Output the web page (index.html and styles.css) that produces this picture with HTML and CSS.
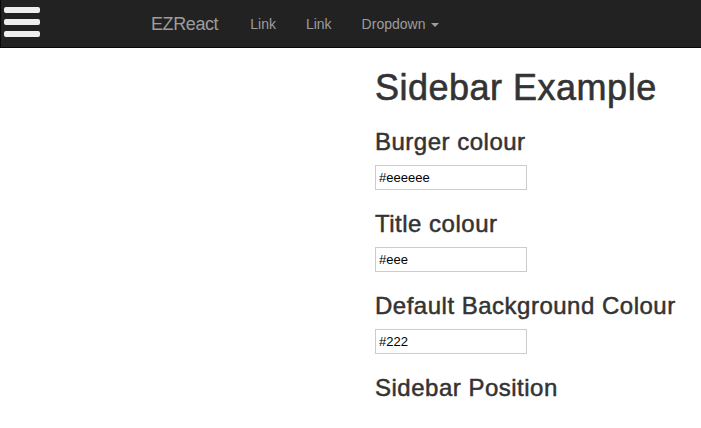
FILE: index.html
```
<!DOCTYPE html>
<html>
<head>
<meta charset="utf-8">
<link rel="stylesheet" href="styles.css">
</head>
<body>
<div class="burger" aria-label="Open menu">
  <span class="bar"></span>
  <span class="bar"></span>
  <span class="bar"></span>
</div>
<nav class="navbar">
  <a class="brand" href="#">EZReact</a>
  <ul class="nav">
    <li><a href="#">Link</a></li>
    <li><a href="#">Link</a></li>
    <li><a href="#">Dropdown <span class="caret"></span></a></li>
  </ul>
</nav>
<main class="content">
  <h1>Sidebar Example</h1>
  <h3>Burger colour</h3>
  <input class="field" type="text" value="#eeeeee">
  <h3>Title colour</h3>
  <input class="field" type="text" value="#eee">
  <h3>Default Background Colour</h3>
  <input class="field" type="text" value="#222">
  <h3>Sidebar Position</h3>
</main>
</body>
</html>
```
FILE: styles.css
```
html, body {
  margin: 0;
  padding: 0;
  background: #fff;
  font-family: "Liberation Sans", Arial, Helvetica, sans-serif;
  color: #333;
  font-size: 14px;
  line-height: 1.42857;
}

.navbar {
  height: 47px;
  background: #222;
  border-bottom: 1px solid #080808;
  border-left: 1px solid #080808;
  display: flex;
  align-items: center;
  margin-bottom: 20px;
}

.brand {
  margin-left: 135px;
  padding: 0 15px;
  font-size: 18px;
  line-height: 20px;
  letter-spacing: -0.4px;
  color: #9d9d9d;
  text-decoration: none;
}

.nav {
  list-style: none;
  margin: 0 0 0 2px;
  padding: 0;
  display: flex;
}

.nav a {
  display: block;
  padding: 0 15px;
  line-height: 20px;
  color: #9d9d9d;
  text-decoration: none;
}

.caret {
  display: inline-block;
  width: 0;
  height: 0;
  margin-left: 2px;
  vertical-align: middle;
  border-top: 4px solid #9d9d9d;
  border-left: 4px solid transparent;
  border-right: 4px solid transparent;
}

.burger {
  position: absolute;
  left: 4px;
  top: 7px;
  width: 36px;
  display: flex;
  flex-direction: column;
  gap: 6px;
}

.burger .bar {
  display: block;
  height: 6px;
  background: #eeeeee;
  border-radius: 2px;
}

.content {
  padding-left: 375px;
}

.content h1 {
  margin: 20px 0 10px;
  font-size: 36px;
  line-height: 1.1;
  font-weight: 500;
  letter-spacing: 0.5px;
  -webkit-text-stroke: 0.6px #333;
}

.content h3 {
  margin: 20px 0 10px;
  font-size: 24px;
  line-height: 27px;
  font-weight: 500;
  letter-spacing: 0.5px;
  -webkit-text-stroke: 0.5px #333;
}

.field {
  display: block;
  box-sizing: border-box;
  width: 152px;
  height: 25px;
  margin: 0;
  padding: 0 3px;
  border: 1px solid #ccc;
  font-family: "Liberation Sans", Arial, sans-serif;
  font-size: 13px;
  color: #000;
  background: #fff;
}
```
